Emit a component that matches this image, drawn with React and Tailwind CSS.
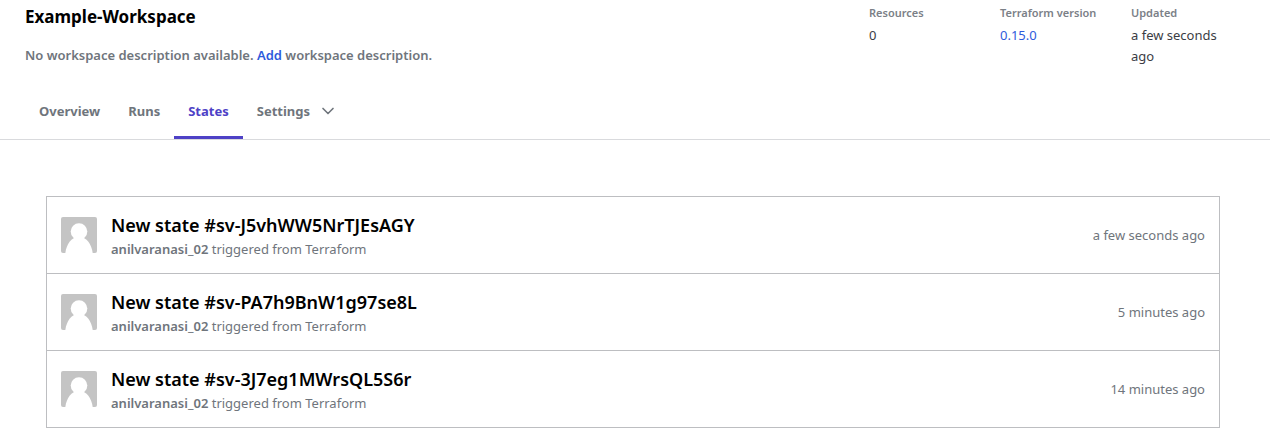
import React from 'react'
import { ChevronDown } from 'lucide-react'

const states = [
  { id: 'sv-J5vhWW5NrTJEsAGY', user: 'anilvaranasi_02', time: 'a few seconds ago' },
  { id: 'sv-PA7h9BnW1g97se8L', user: 'anilvaranasi_02', time: '5 minutes ago' },
  { id: 'sv-3J7eg1MWrsQL5S6r', user: 'anilvaranasi_02', time: '14 minutes ago' },
]

const Avatar = () => (
  <svg viewBox="0 0 36 36" className="w-9 h-9 shrink-0 rounded-xs" aria-hidden="true">
    <rect width="36" height="36" fill="#c4c4c4" />
    <circle cx="18" cy="14.5" r="8.3" fill="#fff" />
    <path d="M4.3 36 C5.5 27.5 10 20 18 20 S30.5 27.5 31.7 36 Z" fill="#fff" />
  </svg>
)

const Stat = ({ label, children }) => (
  <div className="w-[131px] pr-8">
    <dt className="text-[11px] leading-5 font-semibold text-[#7b8087] whitespace-nowrap">{label}</dt>
    <dd className="mt-0.5 text-[13px] leading-[21px] text-[#3b3d45]">{children}</dd>
  </div>
)

const StateRow = ({ state }) => (
  <li className="flex items-center gap-3.5 px-3.5 h-[77px] border-b border-[#bdbec1]">
    <Avatar />
    <div className="flex-1 min-w-0 pb-px">
      <h2 className="text-lg leading-7 font-semibold text-black">
        <a href="#state">New state #{state.id}</a>
      </h2>
      <p className="text-[13px] leading-5 text-[#6f757c]">
        <span className="font-semibold">{state.user}</span> triggered from Terraform
      </p>
    </div>
    <time className="text-[13px] leading-5 text-[#6f757c]">{state.time}</time>
  </li>
)

const App = () => {
  return (
    <div className="bg-white font-['Noto_Sans',sans-serif]">
      {/* Workspace header */}
      <header className="flex justify-between pl-[25px] pr-2 pt-[3px]">
        <div>
          <h1 className="text-[17px] leading-7 font-bold text-black">Example-Workspace</h1>
          <p className="mt-3.5 text-[13px] leading-5 font-semibold text-[#6f757c]">
            No workspace description available.{' '}
            <a href="#description" className="text-[#2e5bdc]">Add</a> workspace description.
          </p>
        </div>
        <dl className="flex">
          <Stat label="Resources">0</Stat>
          <Stat label="Terraform version">
            <a href="#version" className="text-[#2e5bdc]">0.15.0</a>
          </Stat>
          <Stat label="Updated">a few seconds ago</Stat>
        </dl>
      </header>

      {/* Tabs */}
      <nav className="flex mt-4 pl-[25px] border-b border-[#d9dadd] text-[13px] font-bold text-[#6f757c]">
        <a href="#overview" className="px-3.5 pt-[18px] pb-[15px] leading-5 border-b-3 border-transparent">Overview</a>
        <a href="#runs" className="px-3.5 pt-[18px] pb-[15px] leading-5 border-b-3 border-transparent">Runs</a>
        <a href="#states" aria-current="page" className="px-3.5 pt-[18px] pb-[15px] leading-5 border-b-3 border-[#4e41c6] text-[#4e41c6]">States</a>
        <button type="button" className="flex items-center gap-2 px-3.5 pt-[18px] pb-[15px] leading-5 border-b-3 border-transparent">
          Settings
          <ChevronDown className="w-5 h-5" />
        </button>
      </nav>

      {/* State versions */}
      <main className="pt-14 pl-[46px] pr-[50px] pb-3">
        <ul className="border border-b-0 border-[#bdbec1]">
          {states.map((state) => (
            <StateRow key={state.id} state={state} />
          ))}
        </ul>
      </main>
    </div>
  )
}

export default App
